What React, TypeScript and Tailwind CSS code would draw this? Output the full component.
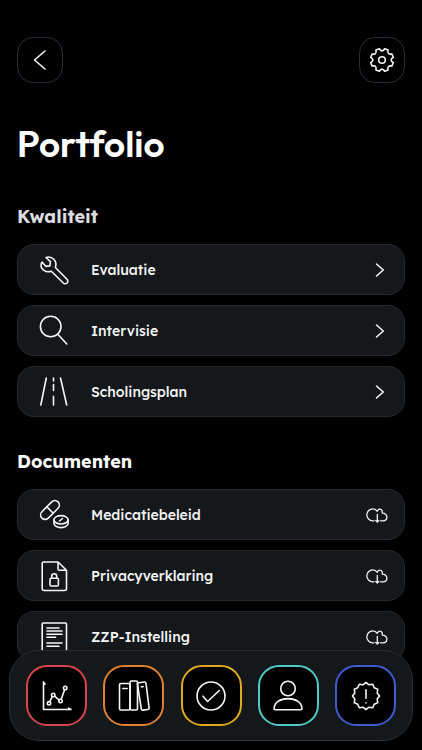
import type { ReactNode } from "react";

const polar = (center: number, radius: number, degrees: number) => {
  const angle = ((degrees - 90) * Math.PI) / 180;
  return `${(center + radius * Math.cos(angle)).toFixed(2)} ${(center + radius * Math.sin(angle)).toFixed(2)}`;
};

const gearPath =
  Array.from({ length: 8 }, (_, i) => {
    const tooth = 22.5 + i * 45;
    const start = polar(13, 11.6, tooth - 9);
    const end = polar(13, 11.6, tooth + 9);
    const valley = polar(13, 7, tooth + 22.5);
    const next = polar(13, 11.6, tooth + 36);
    return `${i === 0 ? `M${start}` : ""}L${end}Q${valley} ${next}`;
  }).join("") + "Z";

const badgePath =
  Array.from({ length: 12 }, (_, i) => {
    const tip = polar(15, 13.5, i * 30);
    const valley = polar(15, 11.6, i * 30 + 15);
    return `${i === 0 ? "M" : "L"}${tip}L${valley}`;
  }).join("") + "Z";

function Icon({ children, width = 30, height = 30 }: { children: ReactNode; width?: number; height?: number }) {
  return (
    <svg
      aria-hidden="true"
      width={width}
      height={height}
      viewBox={`0 0 ${width} ${height}`}
      fill="none"
      stroke="currentColor"
      strokeWidth="1.6"
      strokeLinecap="round"
      strokeLinejoin="round"
      className="shrink-0 overflow-visible"
    >
      {children}
    </svg>
  );
}

const WrenchIcon = () => (
  <Icon>
    <path d="M7 2.5 11.4 6.6 10.9 10.9 6.9 11.4 3 7C1.4 10 2.2 13.3 4.6 15.1 6.8 16.8 9.8 17.1 12.3 16.3L24.3 28a2.6 2.6 0 0 0 3.7-3.7L16.4 12.5C17.4 9.5 17 6.6 14.8 4.3 12.7 2.2 9.8 1.5 7 2.5Z" />
  </Icon>
);

const SearchIcon = () => (
  <Icon>
    <circle cx="11.7" cy="10.5" r="10.3" />
    <path d="m19 18.5 8.8 9.5" />
  </Icon>
);

const RoadIcon = () => (
  <Icon>
    <path d="M7.3 1 1.8 28M21.5 1l6.2 27M14.5 1v3M14.5 7.5v6M14.5 19.3V28" />
  </Icon>
);

const PillsIcon = () => (
  <Icon>
    <rect x="-0.4" y="5.5" width="22.8" height="9" rx="4.5" transform="rotate(-45 11 10)" />
    <path d="m7.800 6.800 6.400 6.400" />
    <ellipse cx="22" cy="19.8" rx="7.1" ry="4.2" />
    <path d="M14.900 20v3.300c0 2.500 3.200 4.300 7.100 4.300s7.100-1.800 7.100-4.300V20M20.500 21l3-2.500" />
  </Icon>
);

const LockedFileIcon = () => (
  <Icon>
    <path d="M4.7 1H19l8.5 8.3v18.2a2 2 0 0 1-2 2H5.2a2 2 0 0 1-2-2V2.5A1.5 1.5 0 0 1 4.7 1ZM19 1v6.8a1.5 1.5 0 0 0 1.5 1.5h7" />
    <rect x="11" y="17.3" width="8.4" height="7.7" rx="1.3" />
    <path d="M12.7 17.3v-2a2.5 2.5 0 0 1 5 0v2" />
  </Icon>
);

const TextFileIcon = () => (
  <Icon>
    <rect x="3.2" y="1" width="24.3" height="28.5" rx="1" />
    <path d="M8 6h12M8 9h15M8 12.2h15M8 15.3h8.5M8 21h15M8 24.3h12" />
  </Icon>
);

const ChevronIcon = () => (
  <Icon width={16} height={16}>
    <path d="m4.5 2 6.8 6-6.8 6" />
  </Icon>
);

const CloudDownloadIcon = () => (
  <Icon width={22} height={16}>
    <path
      strokeWidth="1.3"
      d="M8 13.8H6.600A5.900 5.900 0 0 1 .8 8a6 6 0 0 1 5.900-6.100c2 0 3.500.9 4.500 2.400C11.800 2.800 12.900 2 14.100 2.200c1.600.2 2.500 1.700 2.200 3.900 2.500-.1 4.600 1.600 4.600 3.900s-1.700 3.800-4 3.800h-2.400M11.300 7.500v7.300M9.700 13.400l1.600 1.600 1.600-1.600"
    />
  </Icon>
);

const ChartIcon = () => (
  <Icon>
    <path d="M3 3.2 1.5 1v27.5H29l-2.500-1.300M7.800 20.700l2.500-5M12.600 15.200l4.300 3.600M19.200 18.300 22.600 8.700" />
    <circle cx="7" cy="22.3" r="1.7" />
    <circle cx="11.2" cy="14" r="1.7" />
    <circle cx="18.5" cy="20" r="1.7" />
    <circle cx="23.2" cy="7" r="1.7" />
  </Icon>
);

const BooksIcon = () => (
  <Icon>
    <rect x="0.5" y="2.5" width="10.5" height="26.5" rx="1.5" />
    <rect x="11" y="0" width="7.5" height="29" rx="1.5" />
    <path d="M3.8 7.5h4.4M19.7 1.8l5.6-.8a1.5 1.5 0 0 1 1.7 1.3l3.1 24.5a1.5 1.5 0 0 1-1.3 1.7l-4.8.6a1.5 1.5 0 0 1-1.7-1.3L18.5 3.3a1.4 1.4 0 0 1 1.2-1.5ZM22.3 5.8l1.8-.2" />
  </Icon>
);

const CheckIcon = () => (
  <Icon>
    <circle cx="15" cy="15" r="14" />
    <path d="m7 15.2 4.6 5.3L23.3 9.5" />
  </Icon>
);

const PersonIcon = () => (
  <Icon>
    <circle cx="15" cy="7.5" r="7.3" />
    <path d="M2.2 28.7a1.2 1.2 0 0 1-1.2-1.2C1.3 21.5 7 17.6 15 17.6s13.7 3.9 14 9.9a1.2 1.2 0 0 1-1.2 1.2Z" />
  </Icon>
);

const AlertIcon = () => (
  <Icon>
    <path d={badgePath} />
    <path d="M15 8.8v8.4M15 21.7v.3" />
  </Icon>
);

type Item = { label: string; icon: ReactNode };

const quality: Item[] = [
  { label: "Evaluatie", icon: <WrenchIcon /> },
  { label: "Intervisie", icon: <SearchIcon /> },
  { label: "Scholingsplan", icon: <RoadIcon /> },
];

const documents: Item[] = [
  { label: "Medicatiebeleid", icon: <PillsIcon /> },
  { label: "Privacyverklaring", icon: <LockedFileIcon /> },
  { label: "ZZP-Instelling", icon: <TextFileIcon /> },
];

const tabs = [
  { label: "Statistieken", icon: <ChartIcon />, border: "border-[#d9454d]" },
  { label: "Portfolio", icon: <BooksIcon />, border: "border-[#e0812e]" },
  { label: "Taken", icon: <CheckIcon />, border: "border-[#e0a91f]" },
  { label: "Profiel", icon: <PersonIcon />, border: "border-[#4fcbc6]" },
  { label: "Meldingen", icon: <AlertIcon />, border: "border-[#3f5bd0]" },
];

function Section({ title, titleColor, items, action }: { title: string; titleColor: string; items: Item[]; action: ReactNode }) {
  return (
    <section>
      <h2 className={`text-lg leading-6 font-bold ${titleColor}`}>{title}</h2>
      <ul className="mt-[15px] flex flex-col gap-[10px]">
        {items.map((item) => (
          <li key={item.label}>
            <button
              type="button"
              className="flex h-[51px] w-full items-center rounded-[17px] border border-[#26292d] bg-[#14181b] pr-4 pl-[21px] text-left"
            >
              {item.icon}
              <span className="ml-[22px] flex-1 text-sm leading-5 font-medium">{item.label}</span>
              {action}
            </button>
          </li>
        ))}
      </ul>
    </section>
  );
}

export default function App() {
  return (
    <div className="h-screen overflow-y-auto bg-black font-['Lexend','Inter',sans-serif] text-[#f5f5f5] [scrollbar-width:none]">
      <main className="px-[17px] pt-[37px] pb-28">
        <header className="flex items-center justify-between">
          <button
            type="button"
            aria-label="Terug"
            className="flex size-[46px] items-center justify-center rounded-2xl border border-[#2a2e32]"
          >
            <Icon width={26} height={26}>
              <path d="m18 4-10.5 9L18 22" />
            </Icon>
          </button>
          <button
            type="button"
            aria-label="Instellingen"
            className="flex size-[46px] items-center justify-center rounded-2xl border border-[#2a2e32]"
          >
            <Icon width={26} height={26}>
              <path d={gearPath} />
              <circle cx="13" cy="13" r="3.3" />
            </Icon>
          </button>
        </header>
        <h1 className="mt-10 font-['Outfit','Lexend','Inter',sans-serif] text-[37px] leading-[42px] font-semibold text-white">
          Portfolio
        </h1>
        <div className="mt-10 flex flex-col gap-[33px]">
          <Section title="Kwaliteit" titleColor="text-[#dddde0]" items={quality} action={<ChevronIcon />} />
          <Section title="Documenten" titleColor="text-white" items={documents} action={<CloudDownloadIcon />} />
        </div>
      </main>
      <nav
        aria-label="Hoofdmenu"
        className="fixed inset-x-[9px] bottom-[9px] flex items-center justify-between rounded-[30px] border border-[#2a2d31] bg-[#14181b] px-4 py-[14px]"
      >
        {tabs.map((tab) => (
          <button
            key={tab.label}
            type="button"
            aria-label={tab.label}
            className={`flex size-[61px] items-center justify-center rounded-[21px] border-2 bg-black ${tab.border}`}
          >
            {tab.icon}
          </button>
        ))}
      </nav>
    </div>
  );
}
